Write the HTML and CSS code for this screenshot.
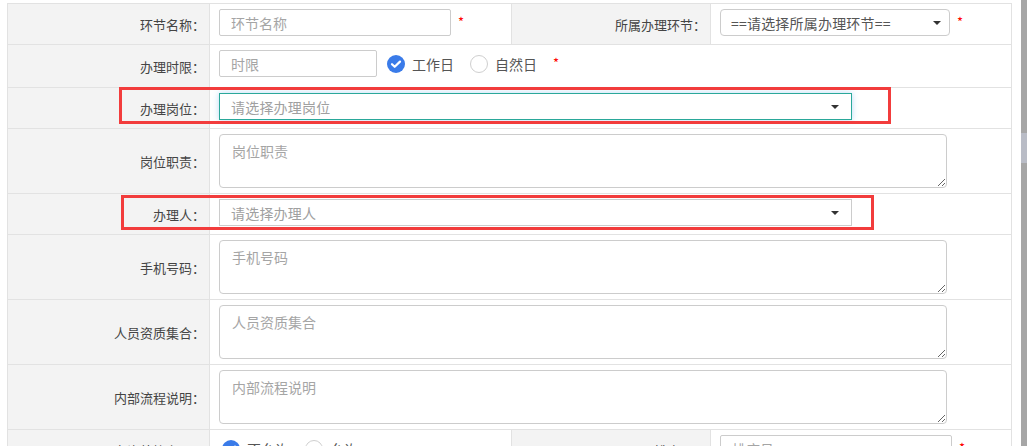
FILE: index.html
```html
<!DOCTYPE html>
<html lang="zh-CN">
<head>
    <meta charset="UTF-8">
    <title>环节设置</title>
    <link rel="stylesheet" href="styles.css">
</head>
<body>
    <div class="page">
        <div class="form-grid">
            <!-- row 1 -->
            <div class="cell label">环节名称：</div>
            <div class="cell value">
                <div class="field">
                    <input class="input input-name" type="text" placeholder="环节名称">
                    <span class="req">*</span>
                </div>
            </div>
            <div class="cell label">所属办理环节：</div>
            <div class="cell value">
                <div class="field">
                    <div class="select select-step">
                        <span class="select-text">==请选择所属办理环节==</span>
                        <span class="caret"></span>
                    </div>
                    <span class="req">*</span>
                </div>
            </div>

            <!-- row 2 -->
            <div class="cell label">办理时限：</div>
            <div class="cell value span3">
                <div class="field">
                    <input class="input input-limit" type="text" placeholder="时限">
                    <div class="options">
                        <label class="opt"><span class="dot on"><svg viewBox="0 0 18 18" width="18" height="18"><path d="M5 9.2l2.7 2.6L13 6.6" fill="none" stroke="#fff" stroke-width="2.2" stroke-linecap="round" stroke-linejoin="round"/></svg></span>工作日</label>
                        <label class="opt"><span class="dot"></span>自然日</label>
                    </div>
                    <span class="req req-wide">*</span>
                </div>
            </div>

            <!-- row 3 -->
            <div class="cell label">办理岗位：</div>
            <div class="cell value span3">
                <div class="select select-wide focused">
                    <span class="select-text placeholder">请选择办理岗位</span>
                    <span class="caret"></span>
                </div>
            </div>

            <!-- row 4 -->
            <div class="cell label">岗位职责：</div>
            <div class="cell value span3">
                <textarea class="area" placeholder="岗位职责"></textarea>
            </div>

            <!-- row 5 -->
            <div class="cell label">办理人：</div>
            <div class="cell value span3">
                <div class="select select-wide">
                    <span class="select-text placeholder">请选择办理人</span>
                    <span class="caret"></span>
                </div>
            </div>

            <!-- row 6 -->
            <div class="cell label">手机号码：</div>
            <div class="cell value span3">
                <textarea class="area" placeholder="手机号码"></textarea>
            </div>

            <!-- row 7 -->
            <div class="cell label">人员资质集合：</div>
            <div class="cell value span3">
                <textarea class="area" placeholder="人员资质集合"></textarea>
            </div>

            <!-- row 8 -->
            <div class="cell label">内部流程说明：</div>
            <div class="cell value span3">
                <textarea class="area" placeholder="内部流程说明"></textarea>
            </div>

            <!-- row 9 -->
            <div class="cell label">是否允许外协办理：</div>
            <div class="cell value">
                <div class="options options-first">
                    <label class="opt"><span class="dot on"><svg viewBox="0 0 18 18" width="18" height="18"><path d="M5 9.2l2.7 2.6L13 6.6" fill="none" stroke="#fff" stroke-width="2.2" stroke-linecap="round" stroke-linejoin="round"/></svg></span>不允许</label>
                    <label class="opt"><span class="dot"></span>允许</label>
                </div>
            </div>
            <div class="cell label">排序号：</div>
            <div class="cell value">
                <div class="field">
                    <input class="input input-name" type="text" placeholder="排序号">
                    <span class="req">*</span>
                </div>
            </div>

            <!-- highlight boxes -->
            <div class="mark mark-post"></div>
            <div class="mark mark-handler"></div>
        </div>
        <div class="scroll-strip"><div class="scroll-tag"></div></div>
    </div>
</body>
</html>
```

FILE: styles.css
```css
* {
    box-sizing: border-box;
}

body {
    margin: 0;
    background: #fff;
    color: #444;
    font-family: "Noto Sans CJK SC", "Microsoft YaHei", sans-serif;
    overflow: hidden;
}

.page {
    display: flex;
    justify-content: space-between;
    height: 446px;
    padding: 3px 0 0 7px;
}

.form-grid {
    position: relative;
    align-self: flex-start;
    width: 1005px;
    display: grid;
    grid-template-columns: 202px 302px 199px 301px;
    grid-template-rows: 41px 43px 41px 65px 41px 65px 65px 65px 41px;
    border-top: 1px solid #e2e2e2;
    border-left: 1px solid #e2e2e2;
}

.cell {
    display: flex;
    border-right: 1px solid #e2e2e2;
    border-bottom: 1px solid #e2e2e2;
}

.label {
    align-items: center;
    justify-content: flex-end;
    padding-right: 4px;
    background: #f3f3f3;
    font-size: 13px;
    color: #444;
    white-space: nowrap;
}

.value {
    align-items: flex-start;
    padding: 5px 0 0 9px;
}

.span3 {
    grid-column: span 3;
}

.field {
    display: flex;
    align-items: center;
}

.input {
    height: 27px;
    padding: 0 11px;
    border: 1px solid #ccc;
    border-radius: 2px;
    font-family: inherit;
    font-size: 14px;
    color: #555;
    outline: none;
}

.input::placeholder,
.area::placeholder {
    color: #a5a5a5;
}

.input-name {
    width: 232px;
}

.input-limit {
    width: 158px;
}

.req {
    margin: 0 0 2px 7px;
    color: #f00;
    font-size: 13px;
    line-height: 1;
}

.req-wide {
    margin-left: 0;
}

.select {
    display: flex;
    align-items: center;
    justify-content: space-between;
    height: 27px;
    padding: 0 8px 0 10px;
    border: 1px solid #ccc;
    border-radius: 4px;
    background: #fff;
    font-size: 14px;
    color: #555;
}

.select-step {
    width: 230px;
}

.select-text {
    letter-spacing: 0.2px;
}

.select-wide {
    width: 633px;
    padding-right: 12px;
    border-radius: 0;
}

.select-wide .select-text {
    padding-left: 1px;
}

.placeholder {
    color: #a0a0a0;
}

.focused {
    border-color: #2aa89a;
    box-shadow: 0 0 6px rgba(102, 175, 233, 0.45);
}

.caret {
    width: 0;
    height: 0;
    border-top: 4px solid #333;
    border-left: 4px solid transparent;
    border-right: 4px solid transparent;
}

.options {
    display: flex;
    align-items: center;
    height: 27px;
    margin-left: 10px;
}

.options-first {
    margin-left: 3px;
}

.opt {
    display: flex;
    align-items: center;
    margin-right: 16px;
    font-size: 14px;
    color: #555;
}

.dot {
    display: flex;
    width: 18px;
    height: 18px;
    margin-right: 7px;
    border: 1px solid #cfcfcf;
    border-radius: 50%;
    background: #fff;
}

.dot.on {
    border: none;
    background: #3a7be9;
}

.area {
    display: block;
    width: 728px;
    height: 54px;
    padding: 6px 12px;
    border: 1px solid #ccc;
    border-radius: 4px;
    font-family: inherit;
    font-size: 14px;
    line-height: 20px;
    color: #555;
    resize: vertical;
    outline: none;
}

.mark {
    position: absolute;
    border: 3px solid #f23c3c;
}

.mark-post {
    left: 111px;
    top: 83px;
    width: 772px;
    height: 37px;
}

.mark-handler {
    left: 113px;
    top: 191px;
    width: 753px;
    height: 35px;
}

.scroll-strip {
    width: 6px;
    margin-top: -3px;
    background: #a6a6a6;
}

.scroll-tag {
    height: 30px;
    margin-top: 133px;
    background: #b9bcc6;
}
```
